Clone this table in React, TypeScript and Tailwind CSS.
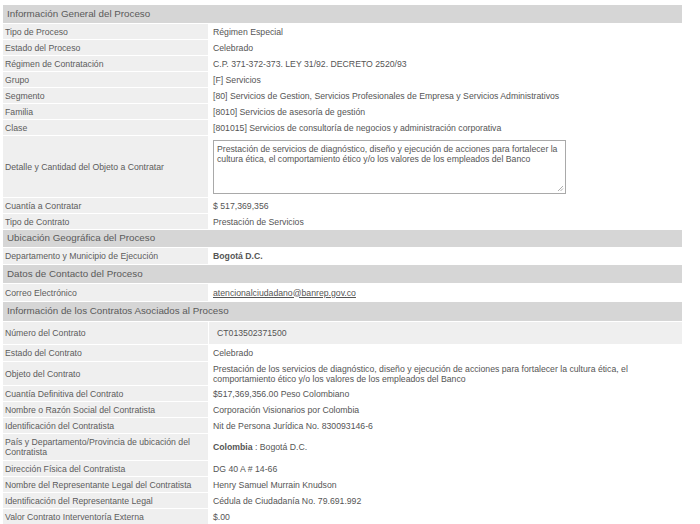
import type { ReactNode } from "react";

function Header({ title, h = "h-[18px]" }: { title: string; h?: string }) {
  return (
    <div className={`flex ${h} items-center border-b border-white bg-[#d6d6d6] pl-[4px] text-[9.8px] text-[#5a5a5a]`}>
      {title}
    </div>
  );
}

function Row({
  label,
  children,
  h = "h-[16px]",
  shaded = false,
  valuePad = "pl-[5px]",
}: {
  label: ReactNode;
  children?: ReactNode;
  h?: string;
  shaded?: boolean;
  valuePad?: string;
}) {
  return (
    <div className={`flex ${h} border-b border-white`}>
      <div className="flex w-[205px] shrink-0 items-center bg-[#efefef] pl-[2px] pr-2 leading-[10px] text-[#5c5c5c]">
        {label}
      </div>
      <div className={`flex flex-1 items-center ${valuePad} leading-[10px] text-[#555] ${shaded ? "ml-px bg-[#efefef]" : ""}`}>
        {children}
      </div>
    </div>
  );
}

export default function App() {
  return (
    <div className="h-[524px] w-[700px] overflow-hidden bg-white pt-[5px] pl-[3px] font-['Liberation_Sans',Arial,sans-serif] text-[8.7px]">
      <div className="w-[679px]">
        <Header title="Información General del Proceso" h="h-[19px]" />
        <Row label="Tipo de Proceso">Régimen Especial</Row>
        <Row label="Estado del Proceso">Celebrado</Row>
        <Row label="Régimen de Contratación">C.P. 371-372-373. LEY 31/92. DECRETO 2520/93</Row>
        <Row label="Grupo">[F] Servicios</Row>
        <Row label="Segmento">
          [80] Servicios de Gestion, Servicios Profesionales de Empresa y Servicios Administrativos
        </Row>
        <Row label="Familia">[8010] Servicios de asesoría de gestión</Row>
        <Row label="Clase">[801015] Servicios de consultoría de negocios y administración corporativa</Row>
        <Row label="Detalle y Cantidad del Objeto a Contratar" h="h-[62px]">
          <div className="relative h-[54px] w-[353px] border border-[#a9a9a9] bg-white px-[3px] pt-[3px] leading-[10px] text-[#555]">
            Prestación de servicios de diagnóstico, diseño y ejecución de acciones para fortalecer la cultura
            ética, el comportamiento ético y/o los valores de los empleados del Banco
            <svg className="absolute right-[1px] bottom-[1px]" width="7" height="7" viewBox="0 0 7 7">
              <path d="M6 1 L1 6 M6 3.5 L3.5 6" stroke="#999" strokeWidth="0.8" />
            </svg>
          </div>
        </Row>
        <Row label="Cuantía a Contratar">$ 517,369,356</Row>
        <Row label="Tipo de Contrato">Prestación de Servicios</Row>
        <Header title="Ubicación Geográfica del Proceso" />
        <Row label="Departamento y Municipio de Ejecución" h="h-[17px]">
          <span className="font-bold">Bogotá D.C.</span>
        </Row>
        <Header title="Datos de Contacto del Proceso" h="h-[19px]" />
        <Row label="Correo Electrónico" h="h-[18px]">
          <span className="underline">atencionalciudadano@banrep.gov.co</span>
        </Row>
        <Header title="Información de los Contratos Asociados al Proceso" h="h-[20px]" />
        <Row label="Número del Contrato" h="h-[23px]" shaded valuePad="pl-[8px]">
          CT013502371500
        </Row>
        <Row label="Estado del Contrato" h="h-[17px]">Celebrado</Row>
        <Row label="Objeto del Contrato" h="h-[24px]">
          <div className="leading-[10px]">
            Prestación de los servicios de diagnóstico, diseño y ejecución de acciones para fortalecer la cultura
            ética, el
            <br />
            comportamiento ético y/o los valores de los empleados del Banco
          </div>
        </Row>
        <Row label="Cuantía Definitiva del Contrato">$517,369,356.00 Peso Colombiano</Row>
        <Row label="Nombre o Razón Social del Contratista">Corporación Visionarios por Colombia</Row>
        <Row label="Identificación del Contratista">Nit de Persona Jurídica No. 830093146-6</Row>
        <Row
          label={
            <span>
              País y Departamento/Provincia de ubicación del
              <br />
              Contratista
            </span>
          }
          h="h-[27px]"
        >
          <span>
            <span className="font-bold">Colombia</span> : Bogotá D.C.
          </span>
        </Row>
        <Row label="Dirección Física del Contratista">DG 40 A # 14-66</Row>
        <Row label="Nombre del Representante Legal del Contratista">Henry Samuel Murrain Knudson</Row>
        <Row label="Identificación del Representante Legal">Cédula de Ciudadanía No. 79.691.992</Row>
        <Row label="Valor Contrato Interventoría Externa">$.00</Row>
      </div>
    </div>
  );
}
